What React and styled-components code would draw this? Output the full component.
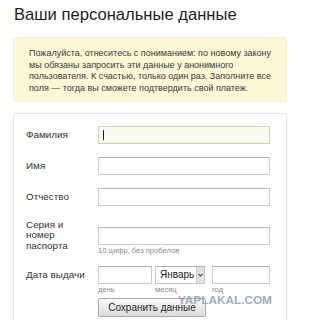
import React from 'react';
import styled, { createGlobalStyle } from 'styled-components';

const GlobalStyle = createGlobalStyle`
  body {
    margin: 0;
    background: #fff;
    font-family: "Liberation Sans", Arial, sans-serif;
    color: #333;
  }
`;

const Page = styled.div`
  width: 291px;
  height: 320px;
  overflow: hidden;
  padding-top: 4px;
  box-sizing: border-box;
`;

const Title = styled.h1`
  margin: 0 0 0 14px;
  font-size: 16.6px;
  font-weight: normal;
  line-height: 22px;
  color: #1e1e1e;
`;

const Notice = styled.div`
  margin: 11px 4px 0 13px;
  padding: 10px 10px 6px 15px;
  background: #fcf7d4;
  border: 1px solid #f6f0cc;
  border-radius: 3px;
  font-size: 9px;
  line-height: 11.7px;
  color: #3a3a3a;
`;

const NoticeLine = styled.span`
  display: block;
  white-space: nowrap;
`;

const FormBox = styled.div`
  position: relative;
  margin: 11px 4px 0 13px;
  padding: 12px 0 10px 12px;
  border: 1px solid #e3e3e3;
  border-radius: 3px;
  box-shadow: 0 0 2px rgba(0, 0, 0, 0.06);
  height: 220px;
`;

const Row = styled.div`
  display: grid;
  grid-template-columns: 72px 172px;
  align-items: start;
  margin-bottom: ${p => p.$gap ?? 13}px;
`;

const Label = styled.div`
  font-size: 9.9px;
  line-height: ${p => (p.$multi ? '10.5px' : '18px')};
  color: #333;
`;

const Input = styled.input`
  display: block;
  box-sizing: border-box;
  width: ${p => p.$w ?? 172}px;
  height: 18px;
  margin: 0;
  margin-top: ${p => p.$top ?? 0}px;
  padding: 0 4px;
  border: 1px solid #cbcbcb;
  border-top-color: #b3b3b3;
  background: #fff;
  font: 10px "Liberation Sans", Arial, sans-serif;
  outline: none;
`;

const FocusedInput = styled.div`
  box-sizing: border-box;
  width: 172px;
  height: 18px;
  padding: 3px 4px;
  border: 1px solid #cfcfb4;
  background: #fbfbef;
`;

const Caret = styled.span`
  display: block;
  width: 1px;
  height: 10px;
  background: #222;
`;

const Hint = styled.div`
  margin-top: 1px;
  font-size: 7.6px;
  line-height: 10px;
  color: #8a8a8a;
`;

const DateRow = styled.div`
  display: flex;
  align-items: flex-start;
`;

const DatePart = styled.div`
  display: flex;
  flex-direction: column;
  margin-right: ${p => p.$mr ?? 0}px;
`;

const Select = styled.div`
  box-sizing: border-box;
  width: ${p => p.$w}px;
  height: 18px;
  display: flex;
  align-items: stretch;
  border: 1px solid #c4c4c4;
  border-top-color: #b3b3b3;
  background: #fff;
`;

const SelectText = styled.span`
  flex: 1;
  padding-left: 4px;
  font-size: 10px;
  line-height: 16px;
  color: #222;
  white-space: nowrap;
  overflow: hidden;
`;

const SelectArrow = styled.span`
  width: 7px;
  display: flex;
  align-items: center;
  justify-content: center;
  background: #e2e2e2;
  border-left: 1px solid #c4c4c4;
`;

const Button = styled.button`
  display: block;
  box-sizing: border-box;
  width: 108px;
  height: 19px;
  margin: 0;
  padding: 0;
  border: 1px solid #a9a9a9;
  border-radius: 2px;
  background: linear-gradient(#fbfbfb, #dcdcdc);
  font: 10px "Liberation Sans", Arial, sans-serif;
  line-height: 17px;
  color: #1e1e1e;
  white-space: nowrap;
`;

const Watermark = styled.div`
  position: absolute;
  left: 164px;
  top: 179px;
  font-size: 11.8px;
  font-weight: bold;
  line-height: 14px;
  color: #93a4be;
  opacity: 0.9;
`;

export default function App() {
  return (
    <Page>
      <GlobalStyle />
      <Title>Ваши персональные данные</Title>
      <Notice>
        <NoticeLine>Пожалуйста, отнеситесь с пониманием: по новому закону</NoticeLine>
        <NoticeLine>мы обязаны запросить эти данные у анонимного</NoticeLine>
        <NoticeLine>пользователя. К счастью, только один раз. Заполните все</NoticeLine>
        <NoticeLine>поля — тогда вы сможете подтвердить свой платеж.</NoticeLine>
      </Notice>
      <FormBox>
        <Row>
          <Label>Фамилия</Label>
          <FocusedInput>
            <Caret />
          </FocusedInput>
        </Row>
        <Row>
          <Label>Имя</Label>
          <Input />
        </Row>
        <Row $gap={14}>
          <Label>Отчество</Label>
          <Input />
        </Row>
        <Row $gap={10}>
          <Label $multi>
            Серия и<br />номер<br />паспорта
          </Label>
          <div>
            <Input $top={7} />
            <Hint>10 цифр, без пробелов</Hint>
          </div>
        </Row>
        <Row $gap={3}>
          <Label>Дата выдачи</Label>
          <DateRow>
            <DatePart $mr={3}>
              <Input $w={54} />
              <Hint>день</Hint>
            </DatePart>
            <DatePart $mr={7}>
              <Select $w={50}>
                <SelectText>Январь</SelectText>
                <SelectArrow>
                  <svg width="5" height="4" viewBox="0 0 5 4">
                    <path d="M0.5 0.8 L2.5 3 L4.5 0.8" fill="none" stroke="#444" strokeWidth="1.1" />
                  </svg>
                </SelectArrow>
              </Select>
              <Hint>месяц</Hint>
            </DatePart>
            <DatePart>
              <Input $w={58} />
              <Hint>год</Hint>
            </DatePart>
          </DateRow>
        </Row>
        <Row>
          <span />
          <Button>Сохранить данные</Button>
        </Row>
        <Watermark>YAPLAKAL.COM</Watermark>
      </FormBox>
    </Page>
  );
}
